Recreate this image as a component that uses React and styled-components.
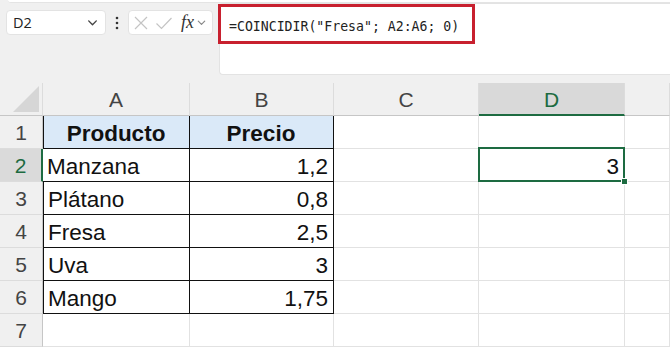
import React from "react";
import styled, { createGlobalStyle } from "styled-components";

const GlobalStyle = createGlobalStyle`
  html, body { margin: 0; padding: 0; background: #f0f0f0; }
  * { box-sizing: border-box; }
`;

const GREEN = "#1d6b41";
const GRID = "#e2e2e2";

const Page = styled.div`
  width: 670px;
  height: 347px;
  overflow: hidden;
  background: #f0f0f0;
  font-family: "Liberation Sans", Arial, sans-serif;
  display: flex;
  flex-direction: column;
`;

const RibbonEdge = styled.div`
  height: 3px;
  margin-left: 8px;
  background: #fff;
  border-radius: 0 0 0 6px;
  border-bottom: 1px solid #e4e4e4;
  flex: none;
`;

const Toolbar = styled.div`
  height: 80px;
  display: flex;
  align-items: flex-start;
  padding-left: 6px;
  flex: none;
`;

const NameBox = styled.div`
  margin-top: 7px;
  width: 100px;
  height: 25px;
  background: #fff;
  border: 1px solid #e3e3e3;
  border-radius: 4px;
  display: flex;
  align-items: center;
  justify-content: space-between;
  padding: 0 6px 0 6px;
  font-family: "Open Sans", sans-serif;
  font-size: 14.5px;
  color: #222;
`;

const Dots = styled.div`
  width: 22px;
  height: 25px;
  margin-top: 7px;
  display: flex;
  align-items: center;
  justify-content: center;
`;

const FuncBox = styled.div`
  margin-top: 7px;
  width: 85px;
  height: 25px;
  background: #fff;
  border: 1px solid #e3e3e3;
  border-radius: 4px;
  display: flex;
  align-items: center;
  padding-left: 4px;
  gap: 6px;
`;

const Fx = styled.span`
  font-family: "Liberation Serif", serif;
  font-style: italic;
  font-size: 18px;
  color: #333;
  margin-left: 2px;
  margin-right: -4px;
`;

const FormulaBox = styled.div`
  margin-left: 6px;
  flex: 1;
  height: 72px;
  background: #fff;
  border: 1px solid #e3e3e3;
  border-right: none;
  border-radius: 4px 0 0 4px;
`;

const Highlight = styled.div`
  margin-left: -2px;
  width: 257px;
  height: 40px;
  border: 3px solid #c8202f;
  display: flex;
  align-items: center;
  padding-left: 8px;
  padding-top: 4px;
  font-family: "DejaVu Sans Mono", "Liberation Mono", monospace;
  font-size: 13.2px;
  color: #222;
  white-space: pre;
`;

const Grid = styled.div`
  display: grid;
  grid-template-columns: 43px 147px 144px 145px 146px 45px;
  grid-auto-rows: 33px;
  flex: none;
`;

const Corner = styled.div`
  background: #f0f0f0;
  border-right: 1px solid #dcdcdc;
  border-bottom: 1px solid #c6c6c6;
  position: relative;
`;

const ColHead = styled.div`
  background: ${(p) => (p.$active ? "#d9d9d9" : "#f0f0f0")};
  border-right: 1px solid #dcdcdc;
  border-bottom: ${(p) => (p.$active ? `2px solid ${GREEN}` : "1px solid #c6c6c6")};
  color: ${(p) => (p.$active ? GREEN : "#444")};
  font-size: 21px;
  display: flex;
  align-items: center;
  justify-content: center;
  padding-top: 2px;
`;

const RowHead = styled.div`
  background: ${(p) => (p.$active ? "#dadada" : "#f0f0f0")};
  border-bottom: 1px solid #dcdcdc;
  border-right: ${(p) => (p.$active ? `2px solid ${GREEN}` : "1px solid #c6c6c6")};
  color: ${(p) => (p.$active ? GREEN : "#444")};
  font-size: 21px;
  display: flex;
  align-items: center;
  justify-content: center;
  padding-top: 2px;
`;

const Cell = styled.div`
  position: relative;
  z-index: ${(p) => (p.$selected ? 2 : "auto")};
  background: ${(p) => (p.$fill ? "#dae9f8" : "#fff")};
  border-right: 1px solid ${(p) => (p.$boxed ? "#111" : GRID)};
  border-bottom: 1px solid ${(p) => (p.$boxed ? "#111" : GRID)};
  border-left: ${(p) => (p.$left ? "1px solid #111" : "none")};
  font-size: 22.5px;
  font-weight: ${(p) => (p.$bold ? 700 : 400)};
  color: #111;
  display: flex;
  align-items: center;
  justify-content: ${(p) => (p.$align === "right" ? "flex-end" : p.$align === "center" ? "center" : "flex-start")};
  padding: 3px 5px 0 4px;
  white-space: nowrap;
`;

const Selection = styled.div`
  position: absolute;
  left: -1px;
  top: -2px;
  right: -1px;
  bottom: -1px;
  border: 2px solid ${GREEN};
  pointer-events: none;
`;

const Handle = styled.div`
  position: absolute;
  right: -5px;
  bottom: -5px;
  width: 7px;
  height: 7px;
  background: ${GREEN};
  border: 1px solid #fff;
`;

const Chevron = ({ size = 12, color = "#555" }) => (
  <svg width={size} height={size} viewBox="0 0 12 12">
    <path d="M2.5 4.5 L6 8 L9.5 4.5" fill="none" stroke={color} strokeWidth="1.3" strokeLinecap="round" strokeLinejoin="round" />
  </svg>
);

const rows = [
  ["Manzana", "1,2"],
  ["Plátano", "0,8"],
  ["Fresa", "2,5"],
  ["Uva", "3"],
  ["Mango", "1,75"],
];

export default function App() {
  return (
    <Page>
      <GlobalStyle />
      <RibbonEdge />
      <Toolbar>
        <NameBox>
          <span>D2</span>
          <Chevron size={13} color="#444" />
        </NameBox>
        <Dots>
          <svg width="4" height="14" viewBox="0 0 4 14">
            <circle cx="2" cy="2" r="1.3" fill="#333" />
            <circle cx="2" cy="7" r="1.3" fill="#333" />
            <circle cx="2" cy="12" r="1.3" fill="#333" />
          </svg>
        </Dots>
        <FuncBox>
          <svg width="16" height="16" viewBox="0 0 16 16">
            <path d="M2 2 L14 14 M14 2 L2 14" stroke="#c4c4c4" strokeWidth="1.2" fill="none" />
          </svg>
          <svg width="18" height="16" viewBox="0 0 18 16">
            <path d="M1.5 8.5 L6.5 13.5 L16.5 3" stroke="#c4c4c4" strokeWidth="1.2" fill="none" />
          </svg>
          <Fx>fx</Fx>
          <Chevron size={11} color="#888" />
        </FuncBox>
        <FormulaBox>
          <Highlight>=COINCIDIR("Fresa"; A2:A6; 0)</Highlight>
        </FormulaBox>
      </Toolbar>
      <Grid>
        <Corner>
          <svg width="26" height="26" viewBox="0 0 26 26" style={{ position: "absolute", right: 3, bottom: 3 }}>
            <path d="M26 0 L26 26 L0 26 Z" fill="#d6d6d6" />
          </svg>
        </Corner>
        <ColHead>A</ColHead>
        <ColHead>B</ColHead>
        <ColHead>C</ColHead>
        <ColHead $active>D</ColHead>
        <ColHead />

        <RowHead>1</RowHead>
        <Cell $fill $boxed $left $bold $align="center">Producto</Cell>
        <Cell $fill $boxed $bold $align="center">Precio</Cell>
        <Cell />
        <Cell />
        <Cell />

        {rows.map(([name, price], i) => (
          <React.Fragment key={name}>
            <RowHead $active={i === 0}>{i + 2}</RowHead>
            <Cell $boxed $left={i !== 0}>{name}</Cell>
            <Cell $boxed $align="right">{price}</Cell>
            <Cell />
            <Cell $align="right" $selected={i === 0}>
              {i === 0 && "3"}
              {i === 0 && (
                <Selection>
                  <Handle />
                </Selection>
              )}
            </Cell>
            <Cell />
          </React.Fragment>
        ))}

        <RowHead>7</RowHead>
        <Cell />
        <Cell />
        <Cell />
        <Cell />
        <Cell />
      </Grid>
    </Page>
  );
}
